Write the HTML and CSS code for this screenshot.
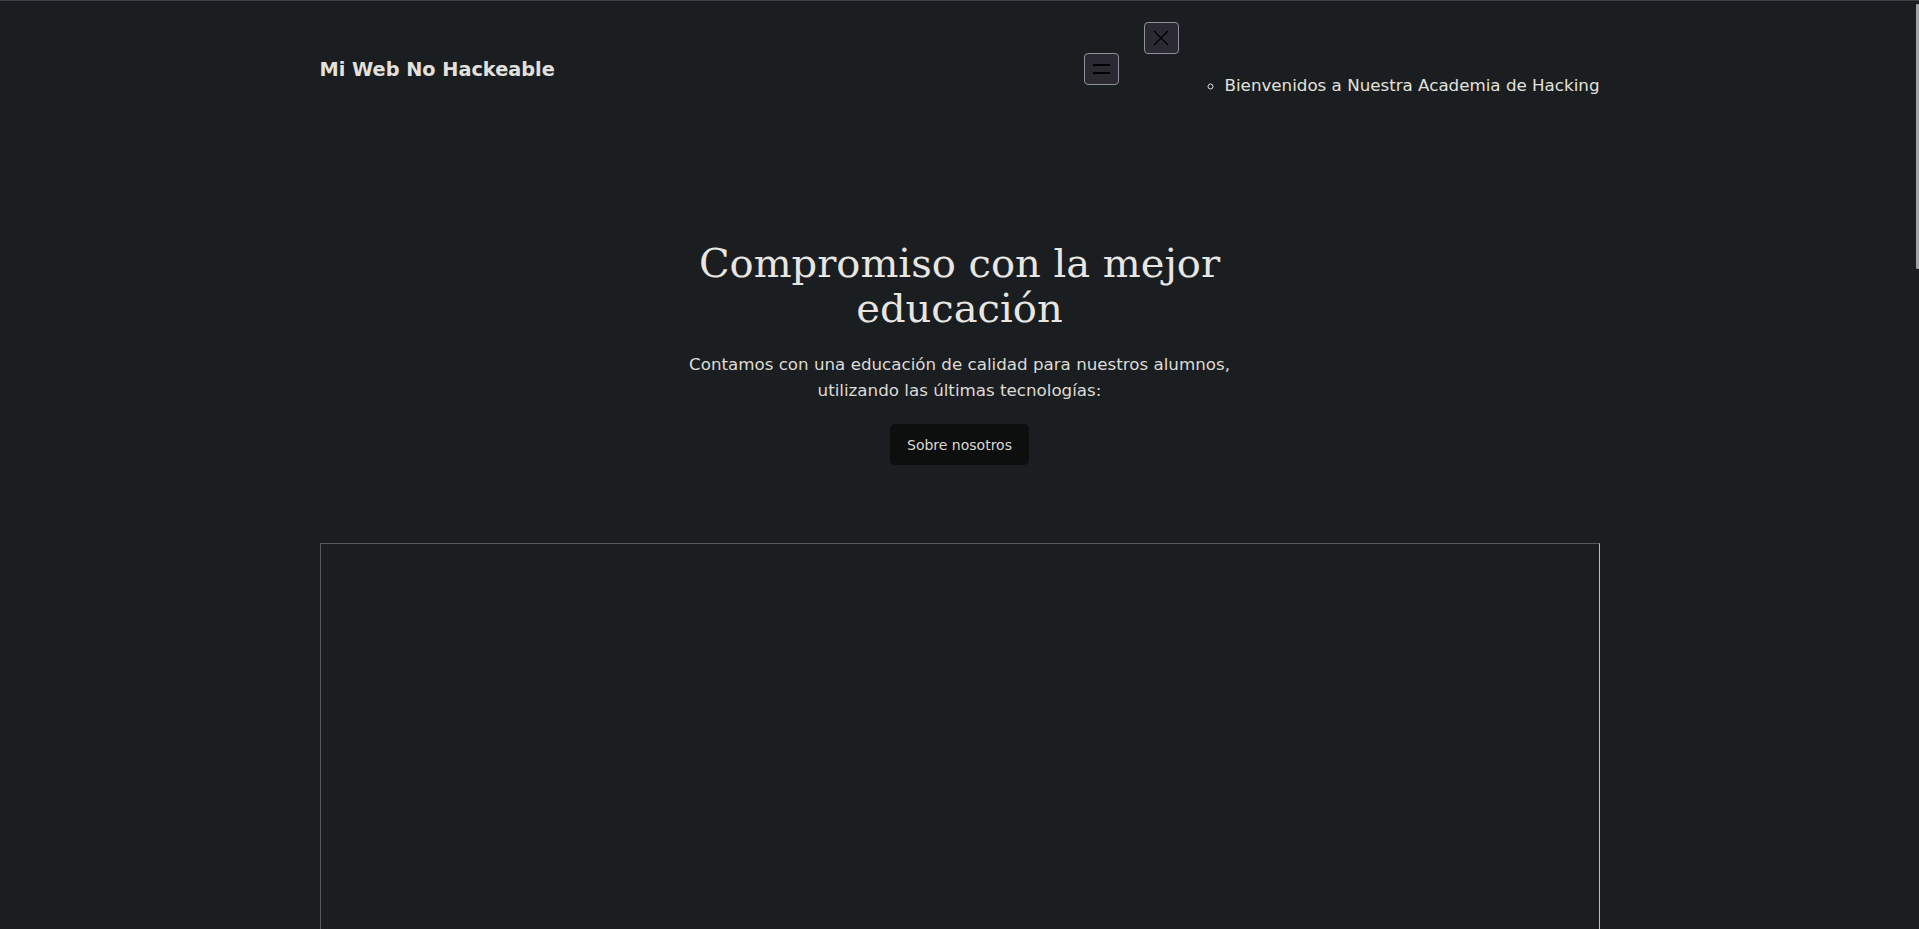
FILE: index.html
```html
<!DOCTYPE html>
<html lang="es">
<head>
<meta charset="utf-8">
<title>Mi Web No Hackeable</title>
<link rel="stylesheet" href="styles.css">
</head>
<body>
<div class="topline"></div>
<header class="header">
  <h1 class="logo">Mi Web No Hackeable</h1>
  <div class="nav-group">
    <button class="btn-menu" aria-label="Abrir menú">
      <svg width="17" height="10" viewBox="0 0 17 10"><path d="M0 1h17M0 9h17" stroke="#000" stroke-width="1.8"/></svg>
    </button>
    <nav class="nav">
      <button class="btn-close" aria-label="Cerrar menú">
        <svg width="16" height="16" viewBox="0 0 16 16"><path d="M1 1L15 15M15 1L1 15" stroke="#000" stroke-width="1.4"/></svg>
      </button>
      <ul class="nav-list">
        <li class="nav-outer">
          <ul class="nav-inner">
            <li>Bienvenidos a Nuestra Academia de Hacking</li>
          </ul>
        </li>
      </ul>
    </nav>
  </div>
</header>
<main class="main">
  <section class="hero">
    <h2 class="hero-title">Compromiso con la mejor educación</h2>
    <p class="hero-text">Contamos con una educación de calidad para nuestros alumnos, utilizando las últimas tecnologías:</p>
    <button class="hero-btn">Sobre nosotros</button>
  </section>
  <div class="frame"></div>
</main>
<div class="scroll-thumb"></div>
</body>
</html>
```

FILE: styles.css
```css
html {
  scrollbar-width: none;
  background: #1b1e20;
}
html::-webkit-scrollbar { width: 0; height: 0; }
body {
  margin: 0;
  background: #1b1e20;
  color: #e8e6e3;
  font-family: "DejaVu Sans", sans-serif;
}
.topline {
  height: 1px;
  background: #3a3e46;
}
.header {
  width: 1280px;
  margin: 0 auto;
  padding-top: 21px;
  display: flex;
  align-items: center;
  justify-content: space-between;
}
.logo {
  margin: 0 0 3px;
  font-size: 19.3px;
  font-weight: bold;
  color: #e3e1dd;
}
.nav-group {
  display: flex;
  align-items: center;
  gap: 25px;
}
.btn-menu, .btn-close {
  display: flex;
  align-items: center;
  justify-content: center;
  width: 35px;
  height: 32px;
  padding: 0;
  background: #2b2a33;
  border: 1px solid #8f8f9d;
  border-radius: 4px;
}
.btn-menu {
  margin-bottom: 4px;
}
.nav {
  display: block;
}
.nav-list {
  margin: 19px 0 22px;
  padding-left: 41px;
  list-style: none;
}
.nav-inner {
  margin: 0;
  padding-left: 40px;
  list-style: circle;
  font-size: 16.7px;
  line-height: 25px;
  color: #e3e1dd;
}
.main {
  width: 1280px;
  margin: 0 auto;
}
.hero {
  display: flex;
  flex-direction: column;
  align-items: center;
  text-align: center;
  padding-top: 121px;
}
.hero-title {
  max-width: 600px;
  margin: 0;
  font-family: "DejaVu Serif", serif;
  font-weight: normal;
  font-size: 40px;
  line-height: 45px;
  color: #e8e6e3;
}
.hero-text {
  max-width: 600px;
  margin: 21px 0 21px;
  font-size: 16.7px;
  line-height: 25.5px;
  color: #dedbd7;
}
.hero-btn {
  width: 139px;
  height: 41px;
  padding: 0;
  border: none;
  border-radius: 5px;
  background: #0d0e0e;
  color: #dcd9d5;
  font-family: "DejaVu Sans", sans-serif;
  font-size: 14px;
}
.frame {
  margin-top: 78px;
  height: 700px;
  border: 1px solid #58595b;
  border-right-color: #bcbcbc;
  border-bottom-color: #bcbcbc;
}
.scroll-thumb {
  position: fixed;
  top: 4px;
  right: 0;
  width: 3px;
  height: 265px;
  background: #a3a3a3;
  border-radius: 1px;
}
```
